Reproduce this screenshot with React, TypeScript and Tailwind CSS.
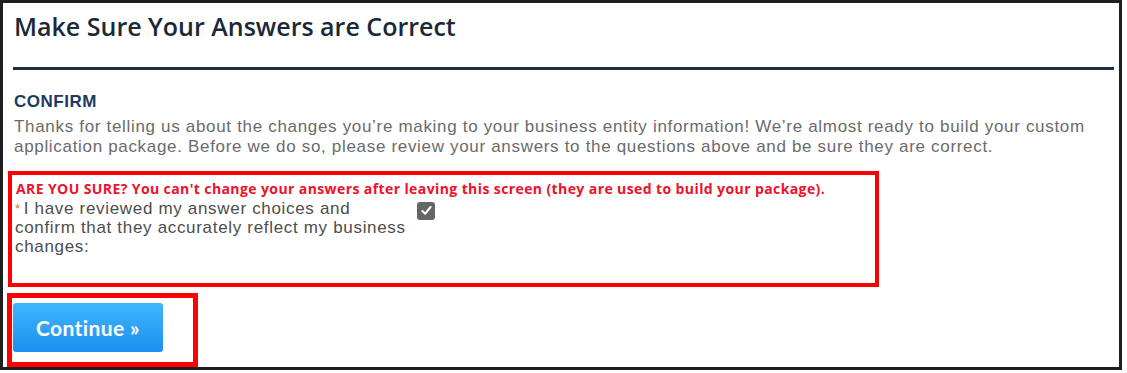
import React from "react";

export default function App() {
  return (
    <div className="w-[1127px] h-[373px] bg-white">
      <div className="w-[1122px] h-[370px] border-[3px] border-[#1f1f1f] bg-white flex flex-col">
        <h1
          className="pl-[11px] pt-[7px] text-[25px] leading-[32px] tracking-[0px] text-[#1b2838] font-semibold whitespace-nowrap"
          style={{ fontFamily: '"Open Sans", sans-serif' }}
        >
          Make Sure Your Answers are Correct
        </h1>
        <div className="ml-[10px] mt-[25px] w-[1101px] h-[3px] bg-[#1f2e42]" />
        <div style={{ fontFamily: '"Liberation Sans", Arial, sans-serif' }}>
          <h2 className="pl-[11px] mt-[22px] text-[17px] leading-[20px] tracking-[0.5px] font-bold text-[#1d3a5f]">CONFIRM</h2>
          <p className="pl-[11px] mt-[5px] text-[17px] leading-[20px] tracking-[0.68px] text-[#6b6b6b] whitespace-nowrap">
            Thanks for telling us about the changes you’re making to your business entity information! We’re almost ready to build your custom
            <br />
            application package. Before we do so, please review your answers to the questions above and be sure they are correct.
          </p>
        </div>
        <div className="ml-[5px] mt-[14px] w-[871px] h-[117px] border-[4px] border-[#ff0000] pl-[3px] pt-[5px]">
          <p
            className="pl-[1px] text-[14px] leading-[17px] font-bold tracking-[0.4px] text-[#f0102a] whitespace-nowrap"
            style={{ fontFamily: '"Open Sans", sans-serif' }}
          >
            ARE YOU SURE? You can't change your answers after leaving this screen (they are used to build your package).
          </p>
          <div className="mt-[2px] flex items-start gap-[6px]" style={{ fontFamily: '"Liberation Sans", Arial, sans-serif' }}>
            <label className="w-[396px] text-[17px] leading-[19px] tracking-[0.68px] text-[#4d4d4d] whitespace-nowrap">
              <span className="text-[#e07a25] text-[13px] align-top mr-[3px]">*</span>
              I have reviewed my answer choices and
              <br />
              confirm that they accurately reflect my business
              <br />
              changes:
            </label>
            <span className="mt-[3px] w-[18px] h-[18px] rounded-[3px] bg-[#666666] flex items-center justify-center">
              <svg width="13" height="13" viewBox="0 0 14 14">
                <path d="M2.5 7.5 L5.6 10.5 L11.5 3.2" fill="none" stroke="#ffffff" strokeWidth="2.2" strokeLinecap="round" strokeLinejoin="round" />
              </svg>
            </span>
          </div>
        </div>
        <div className="ml-[4px] mt-[6px] w-[191px] h-[74px] border-[5px] border-[#ff0000] pl-[1px] pt-[5px]">
          <button
            className="w-[150px] h-[49px] rounded-[3px] bg-gradient-to-b from-[#40b6ff] to-[#1a8ff0] text-white font-bold text-[21px] tracking-[0.4px]"
            style={{ fontFamily: 'Lato, sans-serif' }}
          >
            Continue »
          </button>
        </div>
      </div>
    </div>
  );
}
